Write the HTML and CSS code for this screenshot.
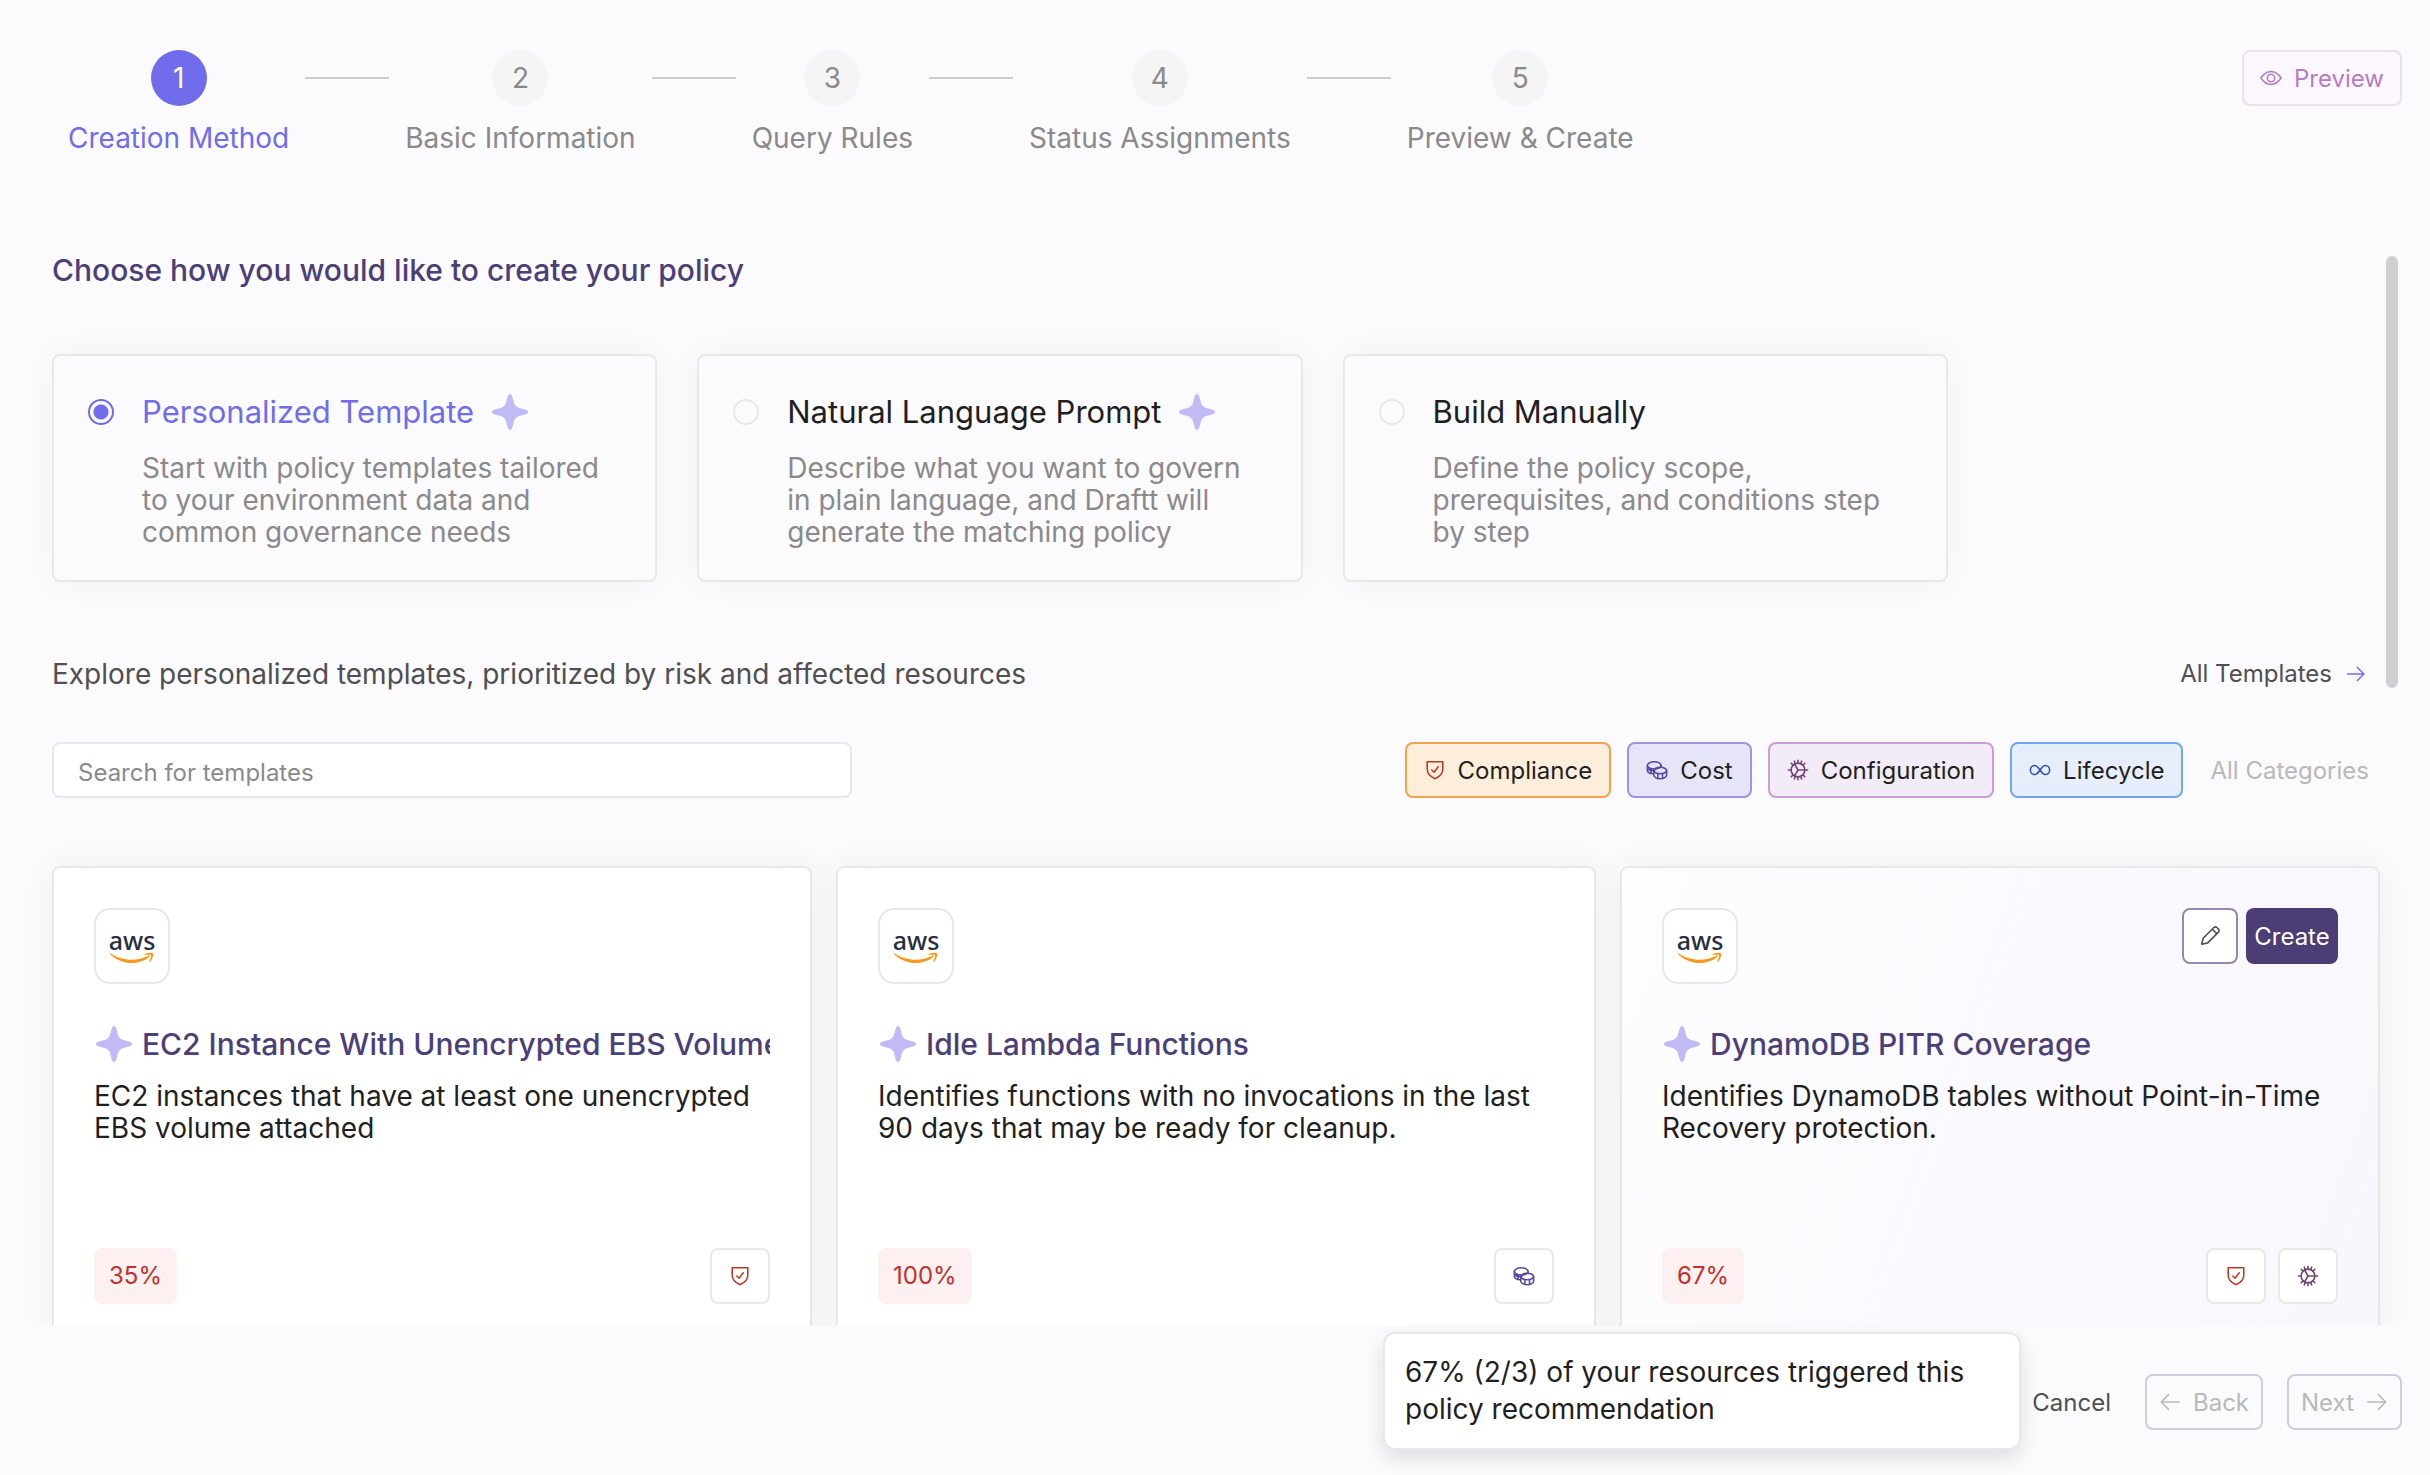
FILE: index.html
```html
<!DOCTYPE html>
<html lang="en">
    <head>
        <meta charset="utf-8">
        <title>Create Policy</title>
        <link rel="stylesheet" href="styles.css">
    </head>
    <body>
        <!-- shared icons -->
        <svg class="sprite" aria-hidden="true">
            <symbol id="sparkle" viewBox="0 0 36 36">
                <path d="M18 0C20 0 20.500 3 21.500 7C22.500 11.500 24.500 13.500 29 14.500C33 15.500 36 16 36 18C36 20 33 20.500 29 21.500C24.500 22.500 22.500 24.500 21.500 29C20.500 33 20 36 18 36C16 36 15.500 33 14.500 29C13.500 24.500 11.500 22.500 7 21.500C3 20.500 0 20 0 18C0 16 3 15.500 7 14.500C11.500 13.500 13.500 11.500 14.500 7C15.500 3 16 0 18 0Z" fill="#c0baf5"/>
            </symbol>
            <symbol id="shield" viewBox="0 0 24 24">
                <path d="M3.500 3H20.500V11C20.500 16 17 19.500 12 21.500C7 19.500 3.500 16 3.500 11Z"/>
                <path d="M8.500 12L11 14.500L15.500 8.500"/>
            </symbol>
            <symbol id="coins" viewBox="0 0 24 24">
                <ellipse cx="9" cy="7" rx="7.500" ry="4"/>
                <path d="M1.500 7V12C1.500 14.500 4.500 16 8 16M16.500 7V9M1.500 10C3 12 6 13 9.500 12.500M5.500 11V15"/>
                <ellipse cx="15.500" cy="12.500" rx="7" ry="3.500"/>
                <path d="M8.500 12.500V17.500C8.500 19.500 11.500 21.500 15.500 21.500S22.500 19.500 22.500 17.500V12.500M13 16V21M18 16V21"/>
            </symbol>
            <symbol id="gear" viewBox="0 0 24 24">
                <circle cx="12" cy="12" r="7.500"/>
                <path d="M12 1.500V4.500M12 19.500V22.500M1.500 12H4.500M12 12H22.500M4.600 4.600L6.700 6.700M17.300 17.300L19.400 19.400M4.600 19.400L6.700 17.300M17.300 6.700L19.400 4.600M8 2.300L9.100 5.100M14.900 18.900L16 21.700M16 2.300L14.900 5.100M9.100 18.900L8 21.700M8.200 5.500L12 12L8.200 18.500"/>
            </symbol>
            <symbol id="infinity" viewBox="0 0 24 24">
                <path d="M12 12C10 9 8.500 7 6 7C3.500 7 1.500 9 1.500 12S3.500 17 6 17C8.500 17 10 15 12 12C14 9 15.500 7 18 7C20.500 7 22.500 9 22.500 12S20.500 17 18 17C15.500 17 14 15 12 12Z"/>
            </symbol>
            <symbol id="eye" viewBox="0 0 24 24">
                <path d="M1 12C4 7.500 7.500 5 12 5S20 7.500 23 12C20 16.500 16.500 19 12 19S4 16.500 1 12Z"/>
                <circle cx="12" cy="12" r="4"/>
            </symbol>
            <symbol id="pencil" viewBox="0 0 24 24">
                <path d="M3 21L4.500 14.500L16.500 2.500C17.500 1.800 18.500 1.800 19.500 2.700L21.300 4.500C22.200 5.500 22.200 6.500 21.500 7.500L9.500 19.500ZM14.500 4.500L19.500 9.500"/>
            </symbol>
            <symbol id="arrow-right" viewBox="0 0 24 24">
                <path d="M2 12H21.500M13.500 4L21.500 12L13.500 20"/>
            </symbol>
            <symbol id="arrow-left" viewBox="0 0 24 24">
                <path d="M22 12H2.500M10.500 4L2.500 12L10.500 20"/>
            </symbol>
            <symbol id="smile" viewBox="0 0 44 14">
                <path d="M0 1C12 9.500 28 9.500 38.500 3.500C39.500 3 40.300 4.200 39.300 5C28 14 11 13 0 2Z"/>
                <path d="M34.500 2.500C37 0.500 42 0.500 43 1.500C44 3 42 8 40 10C39.500 10.300 39 10 39.300 9.400C40.500 6.500 41.500 4 41 3.300C40.300 2.600 37.500 2.800 35 3.200C34.400 3.300 34 2.900 34.500 2.500Z"/>
            </symbol>
        </svg>

        <header class="header">
            <ol class="stepper">
                <li class="step active"><span class="step-number">1</span>Creation Method</li>
                <li class="step-line"></li>
                <li class="step"><span class="step-number">2</span>Basic Information</li>
                <li class="step-line"></li>
                <li class="step"><span class="step-number">3</span>Query Rules</li>
                <li class="step-line"></li>
                <li class="step"><span class="step-number">4</span>Status Assignments</li>
                <li class="step-line"></li>
                <li class="step"><span class="step-number">5</span>Preview &amp; Create</li>
            </ol>
            <button class="btn btn-preview"><svg class="icon"><use href="#eye"/></svg>Preview</button>
        </header>

        <main class="content">
            <h1 class="heading">Choose how you would like to create your policy</h1>

            <div class="options">
                <label class="option selected">
                    <input type="radio" name="method" checked>
                    <span class="option-title">Personalized Template <svg class="sparkle"><use href="#sparkle"/></svg></span>
                    <span class="option-text">Start with policy templates tailored to your environment data and common governance needs</span>
                </label>
                <label class="option">
                    <input type="radio" name="method">
                    <span class="option-title">Natural Language Prompt <svg class="sparkle"><use href="#sparkle"/></svg></span>
                    <span class="option-text">Describe what you want to govern in plain language, and Draftt will generate the matching policy</span>
                </label>
                <label class="option">
                    <input type="radio" name="method">
                    <span class="option-title">Build Manually</span>
                    <span class="option-text">Define the policy scope, prerequisites, and conditions step by step</span>
                </label>
            </div>

            <div class="explore">
                <h2 class="explore-title">Explore personalized templates, prioritized by risk and affected resources</h2>
                <a class="all-templates" href="#">All Templates <svg class="icon"><use href="#arrow-right"/></svg></a>
            </div>

            <div class="toolbar">
                <input class="search" type="text" placeholder="Search for templates" aria-label="Search for templates">
                <div class="filters">
                    <button class="btn chip compliance"><svg class="icon"><use href="#shield"/></svg>Compliance</button>
                    <button class="btn chip cost"><svg class="icon"><use href="#coins"/></svg>Cost</button>
                    <button class="btn chip configuration"><svg class="icon"><use href="#gear"/></svg>Configuration</button>
                    <button class="btn chip lifecycle"><svg class="icon"><use href="#infinity"/></svg>Lifecycle</button>
                    <button class="btn all-categories">All Categories</button>
                </div>
            </div>

            <div class="templates">
                <article class="template">
                    <div class="template-top">
                        <div class="provider">aws<svg class="smile"><use href="#smile"/></svg></div>
                    </div>
                    <h3 class="template-title"><svg class="sparkle"><use href="#sparkle"/></svg>EC2 Instance With Unencrypted EBS Volume</h3>
                    <p class="template-text">EC2 instances that have at least one unencrypted EBS volume attached</p>
                    <div class="template-bottom">
                        <span class="percent">35%</span>
                        <span class="tag compliance"><svg class="icon"><use href="#shield"/></svg></span>
                    </div>
                </article>
                <article class="template">
                    <div class="template-top">
                        <div class="provider">aws<svg class="smile"><use href="#smile"/></svg></div>
                    </div>
                    <h3 class="template-title"><svg class="sparkle"><use href="#sparkle"/></svg>Idle Lambda Functions</h3>
                    <p class="template-text">Identifies functions with no invocations in the last 90 days that may be ready for cleanup.</p>
                    <div class="template-bottom">
                        <span class="percent">100%</span>
                        <span class="tag cost"><svg class="icon"><use href="#coins"/></svg></span>
                    </div>
                </article>
                <article class="template hovered">
                    <div class="template-top">
                        <div class="provider">aws<svg class="smile"><use href="#smile"/></svg></div>
                        <div class="actions">
                            <button class="btn btn-edit" aria-label="Edit"><svg class="icon"><use href="#pencil"/></svg></button>
                            <button class="btn btn-create">Create</button>
                        </div>
                    </div>
                    <h3 class="template-title"><svg class="sparkle"><use href="#sparkle"/></svg>DynamoDB PITR Coverage</h3>
                    <p class="template-text">Identifies DynamoDB tables without Point-in-Time Recovery protection.</p>
                    <div class="template-bottom">
                        <span class="percent">67%</span>
                        <span class="tag compliance"><svg class="icon"><use href="#shield"/></svg></span>
                        <span class="tag configuration"><svg class="icon"><use href="#gear"/></svg></span>
                    </div>
                </article>
            </div>
            <div class="scrollbar"></div>
        </main>

        <footer class="footer">
            <div class="tooltip" role="tooltip">67% (2/3) of your resources triggered this policy recommendation</div>
            <button class="btn btn-cancel">Cancel</button>
            <button class="btn btn-nav" disabled><svg class="icon"><use href="#arrow-left"/></svg>Back</button>
            <button class="btn btn-nav" disabled>Next<svg class="icon"><use href="#arrow-right"/></svg></button>
        </footer>
    </body>
</html>
```
FILE: styles.css
```css
* {
    margin: 0;
    padding: 0;
    box-sizing: border-box;
}

body {
    height: 100vh;
    display: flex;
    flex-direction: column;
    overflow: hidden;
    background: #fbfbfd;
    color: #1f1f21;
    font-family: Inter, sans-serif;
    font-size: 28px;
    line-height: 32px;
}

.sprite {
    position: absolute;
    width: 0;
    height: 0;
}
.icon {
    width: 22px;
    height: 22px;
    flex: none;
    fill: none;
    stroke: currentColor;
    stroke-width: 1.7;
    stroke-linecap: round;
    stroke-linejoin: round;
}
.sparkle {
    width: 36px;
    height: 36px;
    flex: none;
}

.btn {
    height: 56px;
    display: flex;
    align-items: center;
    justify-content: center;
    gap: 12px;
    border: 2px solid transparent;
    border-radius: 8px;
    background: none;
    color: inherit;
    font-family: inherit;
    font-size: 24px;
    white-space: nowrap;
}

/* header */
.header {
    flex: none;
    height: 250px;
    padding: 50px 28px 0 52px;
    display: flex;
    justify-content: space-between;
    align-items: flex-start;
}
.stepper {
    display: flex;
    list-style: none;
}
.step {
    padding: 0 16px;
    display: flex;
    flex-direction: column;
    align-items: center;
    gap: 16px;
    color: #8b898c;
    white-space: nowrap;
}
.step-number {
    width: 56px;
    height: 56px;
    border-radius: 50%;
    background: #f5f5f5;
    line-height: 56px;
    text-align: center;
}
.step.active {
    color: #706cec;
}
.active .step-number {
    background: #706cec;
    color: #fff;
}
.step-line {
    width: 84px;
    height: 2px;
    margin-top: 27px;
    background: #cdcdd0;
}
.btn-preview {
    padding: 0 16px;
    background: #fbf7fd;
    border-color: #ecdff2;
    color: #b57cc4;
}

/* scrolling content */
.content {
    flex: 1;
    min-height: 0;
    padding: 0 50px 0 52px;
    position: relative;
    overflow: hidden;
}
.scrollbar {
    position: absolute;
    top: 6px;
    right: 32px;
    width: 12px;
    height: 432px;
    border-radius: 6px;
    background: #cfcfcf;
}
.heading {
    color: #4c3f77;
    font-size: 30px;
    font-weight: 500;
    line-height: 40px;
}

.options {
    margin-top: 64px;
    display: flex;
    gap: 40px;
}
.option {
    width: 26%;
    padding: 36px 34px 32px;
    display: grid;
    grid-template-columns: 26px 1fr;
    column-gap: 28px;
    row-gap: 20px;
    align-items: center;
    border: 2px solid #e8e8e6;
    border-radius: 8px;
    background: #fbfbfd;
    box-shadow: 0 0 40px rgba(0, 0, 0, 0.04);
}
.option input {
    appearance: none;
    width: 26px;
    height: 26px;
    border: 2px solid #e8e8e8;
    border-radius: 50%;
}
.option input:checked {
    border-color: #706cec;
    background: radial-gradient(#706cec 7px, transparent 8px);
}
.option-title {
    display: flex;
    align-items: center;
    gap: 18px;
    font-size: 31px;
    line-height: 40px;
}
.selected .option-title {
    color: #706cec;
}
.option-text {
    grid-column: 2;
    color: #8b898c;
}

.explore {
    margin-top: 76px;
    display: flex;
    justify-content: space-between;
}
.explore-title {
    color: #4f4f52;
    font-size: 28px;
    font-weight: 400;
}
.all-templates {
    padding-right: 14px;
    display: flex;
    align-items: center;
    gap: 14px;
    color: #4f4f52;
    font-size: 24px;
    text-decoration: none;
}
.all-templates .icon {
    width: 20px;
    height: 20px;
    color: #706cec;
}

.toolbar {
    margin-top: 52px;
    display: flex;
    justify-content: space-between;
}
.search {
    width: 800px;
    height: 56px;
    padding: 4px 24px 0;
    border: 2px solid #e8e8e8;
    border-radius: 8px;
    background: #fff;
    font-family: inherit;
    font-size: 24px;
}
.search::placeholder {
    color: #8b898c;
}
.filters {
    display: flex;
    gap: 16px;
}
.chip {
    padding: 0 17px;
}
.compliance .icon {
    color: #b93a25;
}
.cost .icon {
    color: #56479c;
}
.configuration .icon {
    color: #6d4573;
}
.lifecycle .icon {
    color: #3550b5;
}
.chip.compliance {
    background: #fceedb;
    border-color: #f2a14f;
}
.chip.cost {
    background: #e6e4f7;
    border-color: #9d94e1;
}
.chip.configuration {
    background: #f3ebf7;
    border-color: #ca9dd4;
}
.chip.lifecycle {
    background: #e6eefb;
    border-color: #70a5f3;
}
.all-categories {
    padding: 0 9px;
    color: #b9b8bb;
}

.templates {
    margin-top: 68px;
    display: grid;
    grid-template-columns: repeat(3, 1fr);
    gap: 24px;
}
.template {
    min-width: 0;
    padding: 40px;
    border: 2px solid #e8e8e6;
    border-radius: 8px;
    background: #fff;
    box-shadow: 0 0 40px rgba(0, 0, 0, 0.05);
}
.template.hovered {
    background: linear-gradient(110deg, #fdfdfd, #faf9fe 50%, #f8f7fd);
}
.template-top {
    display: flex;
    justify-content: space-between;
    align-items: flex-start;
}
.provider {
    width: 76px;
    height: 76px;
    padding-top: 18px;
    display: flex;
    flex-direction: column;
    align-items: center;
    border: 2px solid #e8e8e8;
    border-radius: 16px;
    background: #fff;
    color: #252f3e;
    font-family: "Noto Sans", sans-serif;
    font-size: 25px;
    font-weight: 500;
    line-height: 24px;
}
.smile {
    width: 44px;
    height: 14px;
    fill: #f7981f;
}
.actions {
    display: flex;
    gap: 8px;
}
.btn-edit {
    width: 56px;
    background: #fff;
    border-color: #9489b3;
    color: #4f4f52;
}
.btn-create {
    width: 92px;
    background: #4c3d75;
    color: #fff;
}
.template-title {
    margin-top: 40px;
    padding-left: 2px;
    display: flex;
    align-items: center;
    gap: 10px;
    overflow: hidden;
    color: #4c3f77;
    font-size: 30px;
    font-weight: 500;
    line-height: 40px;
    white-space: nowrap;
}
.template-text {
    height: 96px;
    margin-top: 16px;
}
.template-bottom {
    margin-top: 72px;
    display: flex;
    gap: 12px;
}
.percent {
    height: 56px;
    margin-right: auto;
    padding: 0 15px;
    border-radius: 8px;
    background: #fdf0f0;
    color: #c0322b;
    font-size: 24px;
    line-height: 56px;
}
.tag {
    width: 60px;
    height: 56px;
    display: flex;
    align-items: center;
    justify-content: center;
    border: 2px solid #e8e8e6;
    border-radius: 8px;
    background: #fff;
}

/* footer */
.footer {
    flex: none;
    height: 149px;
    padding: 48px 28px 0;
    display: flex;
    justify-content: flex-end;
    gap: 24px;
    position: relative;
}
.tooltip {
    position: absolute;
    top: 6px;
    right: 409px;
    width: 638px;
    padding: 20px;
    border: 2px solid #e8e8e6;
    border-radius: 12px;
    background: #fff;
    box-shadow: 0 8px 20px rgba(0, 0, 0, 0.12);
    line-height: 37px;
}
.btn-cancel {
    padding: 0 8px;
    color: #4f4f52;
}
.btn-nav {
    padding: 0 12px;
    border-color: #cfccde;
    color: #b9b8bb;
}
```
